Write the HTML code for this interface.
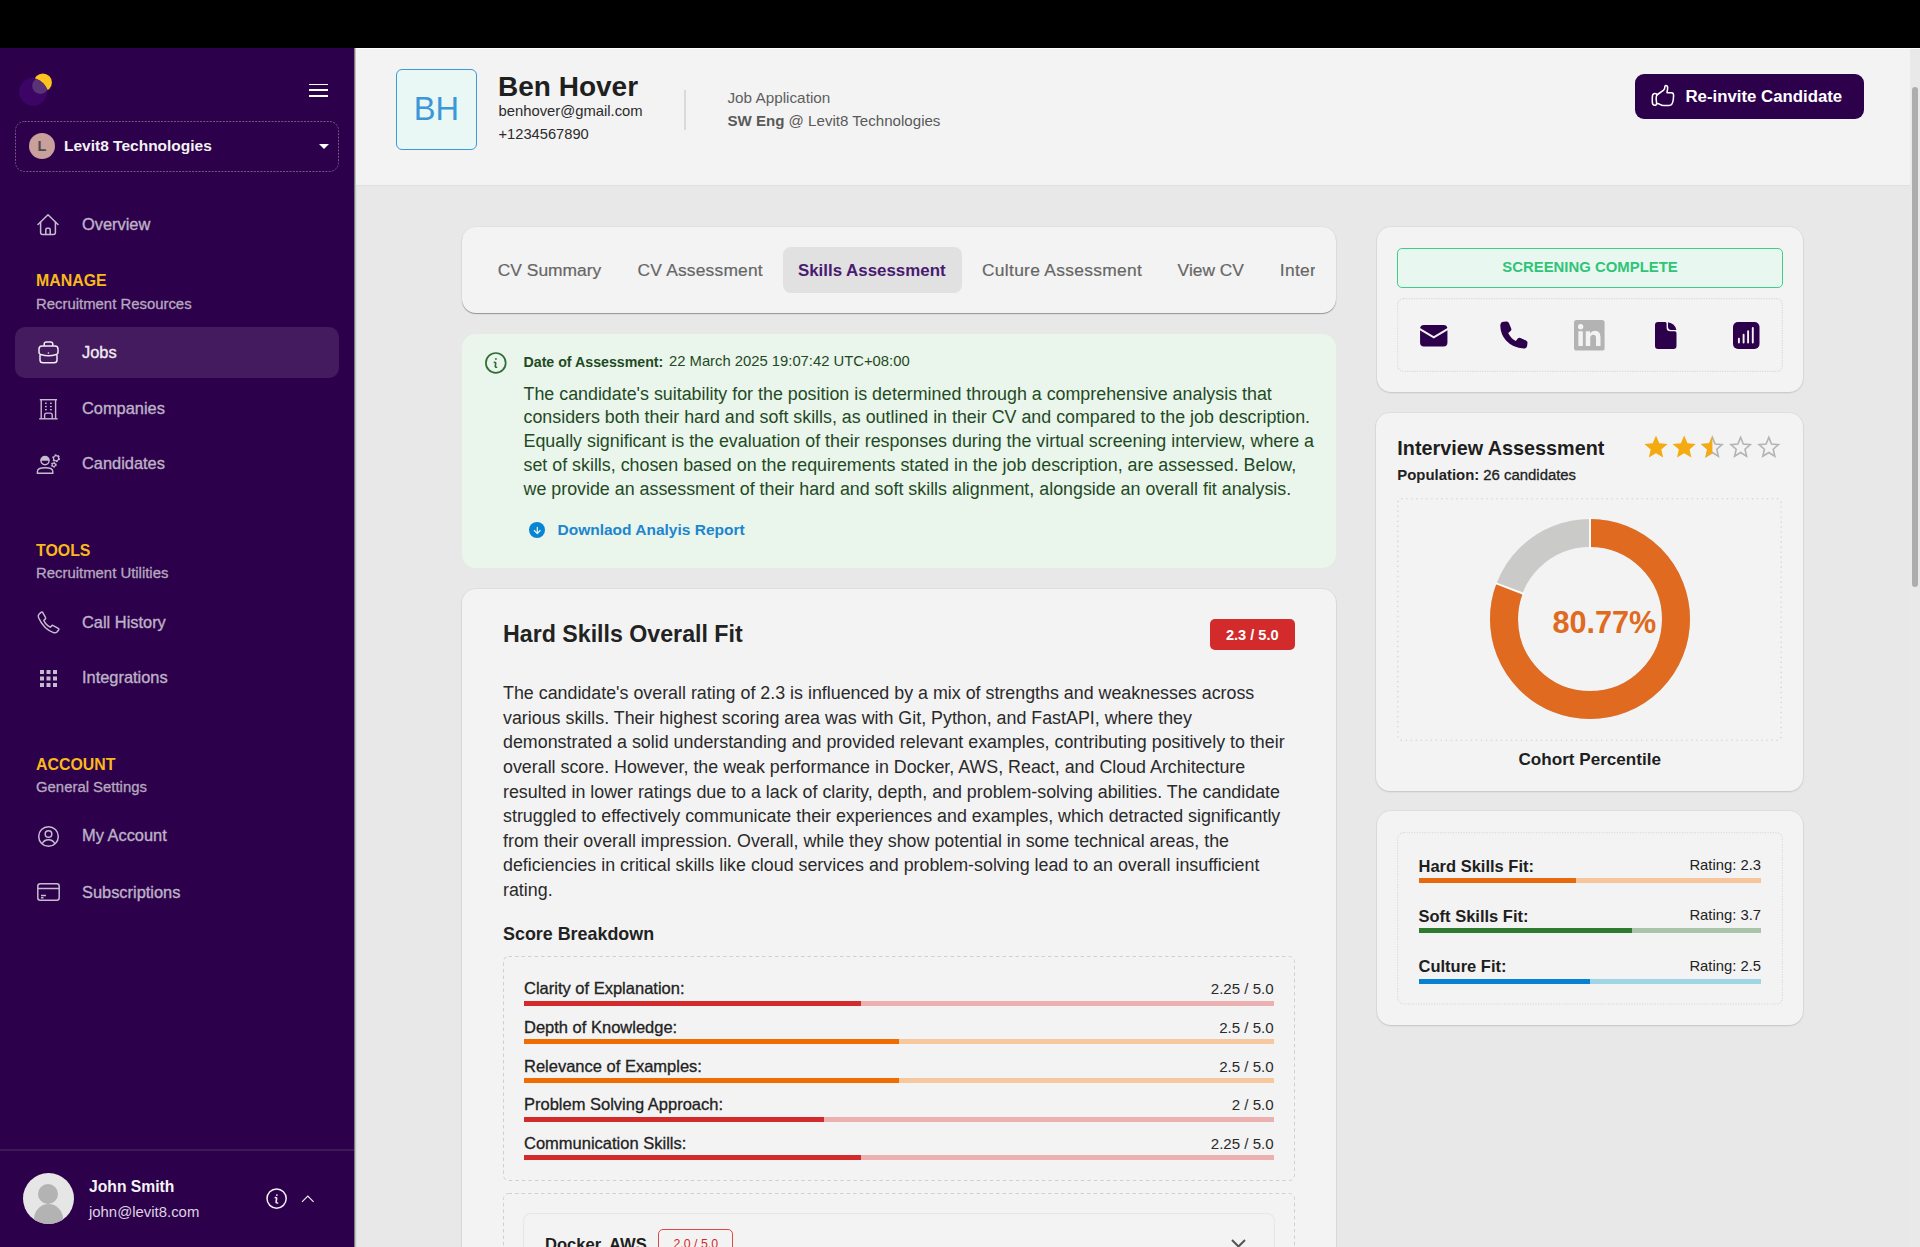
<!DOCTYPE html>
<html><head><meta charset="utf-8">
<style>
*{box-sizing:border-box;margin:0;padding:0}
html,body{width:1920px;height:1247px;overflow:hidden;background:#e8e8e8;font-family:"Liberation Sans",sans-serif}
.a{position:absolute}
.t{position:absolute;white-space:nowrap;line-height:1}
#topbar{left:0;top:0;width:1920px;height:48px;background:#000}
#side{left:0;top:48px;width:354px;height:1199px;background:#2d004b}
#sideb{left:354px;top:48px;width:3px;height:1199px;background:linear-gradient(90deg,#7c7c7c 0,#7c7c7c 1px,#c0c7c0 1px,#c0c7c0 2px,#dfe0e0 2px)}
#hdr{left:356px;top:48px;width:1554px;height:138px;background:#f3f3f3;border-bottom:1px solid #e0e0e0;border-top:1px solid #fff}
#sb{left:1910px;top:48px;width:10px;height:1199px;background:#e9e9e9;border-top:1px solid #fff}
#thumb{left:1912px;top:87px;width:5.5px;height:499.6px;background:#adadad;border-radius:3px}
.card{position:absolute;background:#f3f3f3;border-radius:14px;box-shadow:0 0 0 1px rgba(0,0,0,.035),0 1px 2px rgba(0,0,0,.12)}
.nav{color:#bdb3c7;font-size:16.4px;-webkit-text-stroke:0.35px #bdb3c7}
.sec{color:#f9b91a;font-size:15.9px;font-weight:bold;letter-spacing:0}
.sub{color:#b5a9bf;font-size:14.9px;-webkit-text-stroke:0.3px #b5a9bf}
svg{position:absolute;overflow:visible}
</style></head><body>
<div id="topbar" class="a"></div>
<div id="side" class="a"></div>
<div id="sideb" class="a"></div>
<div id="hdr" class="a"></div>
<div id="sb" class="a"></div>
<div id="thumb" class="a"></div>

<!-- sidebar content -->
<!-- logo -->
<svg style="left:15px;top:70px" width="40" height="40" viewBox="0 0 40 40">
<defs><clipPath id="lc"><circle cx="14" cy="27.4" r="20"/></clipPath>
<mask id="ym"><rect x="0" y="0" width="40" height="40" fill="#fff"/><circle cx="14" cy="27.4" r="20" fill="#000"/></mask></defs>
<circle cx="18.1" cy="21.8" r="14" fill="#3c0465"/>
<circle cx="27.85" cy="12.5" r="9.05" fill="#fec31f" mask="url(#ym)"/>
<circle cx="25.4" cy="15.7" r="8.2" fill="#5a3278" clip-path="url(#lc)"/>
</svg>

<!-- hamburger -->
<div class="a" style="left:309px;top:83.7px;width:19px;height:1.8px;background:#fff"></div>
<div class="a" style="left:309px;top:89.2px;width:19px;height:1.8px;background:#fff"></div>
<div class="a" style="left:309px;top:94.9px;width:19px;height:1.8px;background:#fff"></div>

<!-- company selector -->
<svg style="left:15px;top:121px" width="324" height="51" viewBox="0 0 324 51"><rect x="0.5" y="0.5" width="323" height="50" rx="9" fill="none" stroke="#6f5887" stroke-width="1" stroke-dasharray="2 1.25" stroke-linecap="butt"/></svg>
<div class="a" style="left:29px;top:133px;width:26px;height:26px;border-radius:50%;background:#c9a09c"></div>
<div class="t" style="left:29px;width:26px;text-align:center;top:138.5px;font-size:14.5px;color:#4d4d4d;font-weight:bold">L</div>
<div class="t" style="left:64px;top:138px;font-size:15.5px;color:#f2f2f2;font-weight:bold">Levit8 Technologies</div>
<div class="a" style="left:319px;top:144px;width:0;height:0;border-left:5px solid transparent;border-right:5px solid transparent;border-top:5px solid #fff"></div>


<!-- nav -->
<div class="a" style="left:15px;top:327px;width:324px;height:51px;border-radius:10px;background:#431b5e"></div>
<div class="t nav" style="left:82px;top:215.8px">Overview</div>
<div class="t sec" style="left:36px;top:273.4px">MANAGE</div>
<div class="t sub" style="left:36px;top:296.5px">Recruitment Resources</div>
<div class="t nav" style="left:82px;top:343.6px;color:#f0ecf2;-webkit-text-stroke:0.35px #f0ecf2">Jobs</div>
<div class="t nav" style="left:82px;top:399.7px">Companies</div>
<div class="t nav" style="left:82px;top:455.4px">Candidates</div>
<div class="t sec" style="left:36px;top:542.7px">TOOLS</div>
<div class="t sub" style="left:36px;top:566.3px">Recruitment Utilities</div>
<div class="t nav" style="left:82px;top:613.7px">Call History</div>
<div class="t nav" style="left:82px;top:669.4px">Integrations</div>
<div class="t sec" style="left:36px;top:757.4px">ACCOUNT</div>
<div class="t sub" style="left:36px;top:780.3px">General Settings</div>
<div class="t nav" style="left:82px;top:827.2px">My Account</div>
<div class="t nav" style="left:82px;top:883.7px">Subscriptions</div>

<!-- icons -->
<svg style="left:37px;top:213px" width="22" height="23" viewBox="0 0 22 23" fill="none" stroke="#c6bccf" stroke-width="1.5" stroke-linejoin="round" stroke-linecap="round">
<path d="M1 11.5 L11 1.8 L21 11.5"/><path d="M3.6 9.2 V19.6 Q3.6 21.6 5.6 21.6 H16.4 Q18.4 21.6 18.4 19.6 V9.2"/><path d="M8.8 21.6 V16.4 Q8.8 15.2 10 15.2 H12 Q13.2 15.2 13.2 16.4 V21.6"/></svg>
<svg style="left:38px;top:341px" width="22" height="23" viewBox="0 0 22 23" fill="none" stroke="#f0ecf2" stroke-width="1.5" stroke-linejoin="round">
<path d="M1 8 Q1 4.9 4 4.9 H17 Q20 4.9 20 8 V11.3 Q20 13.3 17.5 13.8 Q10.5 15.6 3.5 13.8 Q1 13.3 1 11.3 Z"/><path d="M2 14 V19 Q2 21.8 5 21.8 H16 Q19 21.8 19 19 V14"/><path d="M6.2 4.9 V3.2 Q6.2 1 8.4 1 H12.6 Q14.8 1 14.8 3.2 V4.9"/><circle cx="10.4" cy="12" r="0.8" fill="#f0ecf2" stroke="none"/></svg>
<svg style="left:39px;top:397.5px" width="19" height="22" viewBox="0 0 19 22" fill="none" stroke="#c6bccf" stroke-width="1.4">
<path d="M0.8 1.7 H18"/><path d="M2.2 1.7 V20.8 M16.6 1.7 V20.8"/><path d="M0.2 20.8 H18.6"/><path d="M5.6 20.8 V17 Q5.6 15.1 7.6 15.1 H11.2 Q13.2 15.1 13.2 17 V20.8"/>
<g fill="#c6bccf" stroke="none"><rect x="6" y="4.6" width="1.8" height="1.3"/><rect x="11" y="4.6" width="1.8" height="1.3"/><rect x="6" y="7.9" width="1.8" height="1.3"/><rect x="11" y="7.9" width="1.8" height="1.3"/><rect x="6" y="11" width="1.8" height="1.3"/><rect x="11" y="11" width="1.8" height="1.3"/></g></svg>
<svg style="left:36px;top:455px" width="24" height="20" viewBox="0 0 24 20" fill="none" stroke="#c6bccf" stroke-width="1.4">
<path d="M1.4 18.3 V16.5 Q1.4 12.8 9.1 12.8 Q16.8 12.8 16.8 16.5 V18.3 Z"/>
<circle cx="9" cy="5.6" r="4.1"/><path d="M4.6 5.8 H13.4 Q13.4 1.2 9 1.2 Q4.6 1.2 4.6 5.8 Z" fill="#c6bccf" stroke="none"/>
<g fill="none"><circle cx="20.1" cy="3.3" r="2.6" stroke-width="1.3"/><circle cx="20.1" cy="3.3" r="3.3" stroke-width="1.4" stroke-dasharray="1.6 1.85"/>
<circle cx="17.8" cy="9.8" r="1.7" stroke-width="1.2"/><circle cx="17.8" cy="9.8" r="2.3" stroke-width="1.2" stroke-dasharray="1.2 1.2"/></g></svg>
<svg style="left:37px;top:611px" width="23" height="23" viewBox="0 0 23 23" fill="none" stroke="#c6bccf" stroke-width="1.5" stroke-linejoin="round">
<path d="M5.5 1.2 L8.5 6.5 Q9 7.5 8 8.3 L6.8 9.3 Q8.5 13.8 13.3 16.2 L14.5 15 Q15.3 14 16.3 14.6 L21.6 17.6 Q22.2 18.2 21.6 19 L20 21 Q18.6 22.2 16.5 21.6 Q6.5 18 1.5 6.5 Q0.8 4.5 2 3.2 L4 1.4 Q4.8 0.8 5.5 1.2 Z"/></svg>
<svg style="left:40px;top:670px" width="17" height="17" viewBox="0 0 17 17" fill="#c6bccf">
<rect x="0" y="0" width="4" height="4"/><rect x="6.5" y="0" width="4" height="4"/><rect x="13" y="0" width="4" height="4"/>
<rect x="0" y="6.5" width="4" height="4"/><rect x="6.5" y="6.5" width="4" height="4"/><rect x="13" y="6.5" width="4" height="4"/>
<rect x="0" y="13" width="4" height="4"/><rect x="6.5" y="13" width="4" height="4"/><rect x="13" y="13" width="4" height="4"/></svg>
<svg style="left:38px;top:826px" width="21" height="21" viewBox="0 0 21 21" fill="none" stroke="#c6bccf" stroke-width="1.5">
<circle cx="10.5" cy="10.5" r="9.8"/><circle cx="10.5" cy="8" r="3.3"/><path d="M4.2 17.8 Q6 13.8 10.5 13.8 Q15 13.8 16.8 17.8"/></svg>
<svg style="left:37px;top:883px" width="23" height="18" viewBox="0 0 23 18" fill="none" stroke="#c6bccf" stroke-width="1.5">
<rect x="0.8" y="0.8" width="21.4" height="16.4" rx="2.5"/><path d="M0.8 5.5 H22.2"/><path d="M4 12.5 H9 M4 14.8 H6.5"/></svg>

<!-- sidebar footer -->
<div class="a" style="left:0;top:1149px;width:354px;height:2px;background:#3c1957"></div>
<div class="a" style="left:23px;top:1173px;width:51px;height:51px;border-radius:50%;background:#e6e6e6;overflow:hidden">
<div class="a" style="left:15px;top:11px;width:20px;height:20px;border-radius:50%;background:#b3b3b3"></div>
<div class="a" style="left:11px;top:31px;width:29px;height:30px;border-radius:50%;background:#b3b3b3"></div></div>
<div class="t" style="left:89px;top:1179px;font-size:15.7px;font-weight:bold;color:#f4f4f4">John Smith</div>
<div class="t" style="left:89px;top:1205.2px;font-size:14.9px;color:#ddd3e2">john@levit8.com</div>
<svg style="left:266px;top:1188px" width="21" height="21" viewBox="0 0 21 21" fill="none" stroke="#f2f2f2" stroke-width="1.5">
<circle cx="10.6" cy="10.6" r="9.6"/><path d="M9.3 9.6 Q10.9 9.4 10.6 10.9 L10.1 13.6 Q9.9 15.2 11.6 15" stroke-width="1.6" stroke-linecap="round" stroke-linejoin="round"/><circle cx="10.9" cy="7.1" r="0.9" fill="#f2f2f2" stroke="none"/></svg>
<svg style="left:301px;top:1195px" width="14" height="8" viewBox="0 0 14 8" fill="none" stroke="#eee" stroke-width="1.15"><path d="M1 6.8 L6.8 1 L12.6 6.8"/></svg>

<!-- header -->
<div class="a" style="left:396px;top:69px;width:81px;height:81px;border:1.8px solid #3d9ad8;border-radius:6px;background:#e9f7f5"></div>
<div class="t" style="left:396px;width:81px;text-align:center;top:93.2px;font-size:32.6px;color:#3a98d8">BH</div>
<div class="t" style="left:498px;top:72.8px;font-size:28px;font-weight:bold;color:#1f1f1f">Ben Hover</div>
<div class="t" style="left:498.5px;top:103.5px;font-size:14.8px;color:#2b2b2b">benhover@gmail.com</div>
<div class="t" style="left:498.5px;top:127px;font-size:14.7px;color:#2b2b2b">+1234567890</div>
<div class="a" style="left:684px;top:89.5px;width:2px;height:40px;background:#dadada"></div>
<div class="t" style="left:727.4px;top:90px;font-size:15.3px;color:#606060">Job Application</div>
<div class="t" style="left:727.4px;top:112.8px;font-size:15.1px;color:#595959"><b>SW Eng</b> @ Levit8 Technologies</div>
<div class="a" style="left:1635px;top:74px;width:229px;height:45px;border-radius:9px;background:#2d004b"></div>
<div class="t" style="left:1685.5px;top:88.7px;font-size:16.8px;font-weight:bold;color:#fff">Re-invite Candidate</div>
<svg style="left:1645px;top:80px" width="40" height="32" viewBox="0 0 40 32" fill="none" stroke="#fff" stroke-width="1.55" stroke-linejoin="round" stroke-linecap="round">
<path d="M9.6 13.6 Q7.3 13.8 7.3 17.5 L7.3 22 Q7.4 25.3 9.8 25.3 Q11.7 25.3 11.6 23 L11.2 19.5 Q11.1 16.5 11.8 15 Q12 13.5 9.6 13.6 Z"/>
<path d="M11.8 15 L18.3 10.4 Q19.8 9.2 19.8 7.6 Q19.8 5.4 20.8 5.4 Q22.7 5.4 22.7 8 L22 12.7 L26.4 12.7 Q28.6 12.7 28.6 15.3 L28.3 19.5 Q27.6 25.5 24 25.5 L18.6 25.5 Q16.6 25.5 15 24.4 Q13.8 23.5 11.8 23.5"/></svg>

<!-- tabs card -->
<div class="card" style="left:462px;top:227px;width:874px;height:86px;box-shadow:0 1px 1px rgba(0,0,0,.35),0 0 2px rgba(0,0,0,.08)"></div>
<div class="a" style="left:783px;top:247px;width:179px;height:46px;border-radius:8px;background:#e1e1e1"></div>
<div class="a" style="left:462px;top:227px;width:874px;height:86px;overflow:hidden">
<div class="t" style="left:35.8px;top:261.6px;font-size:17.4px;color:#666;-webkit-text-stroke:0.2px #666;position:absolute;margin-top:-227px">CV Summary</div>
<div class="t" style="left:175.5px;top:261.6px;font-size:17.4px;color:#666;-webkit-text-stroke:0.2px #666;margin-top:-227px;letter-spacing:0.2px">CV Assessment</div>
<div class="t" style="left:335.9px;top:262.8px;font-size:16.9px;font-weight:bold;color:#481a70;margin-top:-227px">Skills Assessment</div>
<div class="t" style="left:520px;top:261.6px;font-size:17.4px;color:#666;-webkit-text-stroke:0.2px #666;margin-top:-227px;letter-spacing:0.3px">Culture Assessment</div>
<div class="t" style="left:715.6px;top:261.6px;font-size:17.4px;color:#666;-webkit-text-stroke:0.2px #666;margin-top:-227px">View CV</div>
<div class="t" style="left:817.8px;top:261.6px;font-size:17.4px;color:#666;-webkit-text-stroke:0.2px #666;margin-top:-227px;width:35.6px;overflow:hidden;letter-spacing:0.3px">Interview</div>
</div>

<!-- green info -->
<div class="a" style="left:462px;top:334px;width:874px;height:234px;border-radius:14px;background:#eaf5eb"></div>
<svg style="left:484.5px;top:352px" width="22" height="22" viewBox="0 0 22 22" fill="none" stroke="#2f6e35" stroke-width="1.7">
<circle cx="10.8" cy="10.9" r="9.9"/><path d="M9.4 10.4 Q10.9 10.2 10.7 11.6 L10.3 13.9 Q10.1 15.4 11.6 15.3" stroke-width="1.6" stroke-linecap="round" stroke-linejoin="round"/><circle cx="10.9" cy="6.9" r="0.95" fill="#2f6e35" stroke="none"/></svg>
<div class="t" style="left:523.5px;top:354.5px;font-size:14.2px;color:#1e4a24"><b>Date of Assessment:</b></div>
<div class="t" style="left:669px;top:354px;font-size:14.8px;color:#1e4a24">22 March 2025 19:07:42 UTC+08:00</div>
<div class="a" style="left:523.5px;top:382.6px;font-size:17.85px;line-height:23.875px;color:#1f4a25;white-space:nowrap">The candidate's suitability for the position is determined through a comprehensive analysis that<br>considers both their hard and soft skills, as outlined in their CV and compared to the job description.<br>Equally significant is the evaluation of their responses during the virtual screening interview, where a<br>set of skills, chosen based on the requirements stated in the job description, are assessed. Below,<br>we provide an assessment of their hard and soft skills alignment, alongside an overall fit analysis.</div>
<div class="a" style="left:528.9px;top:521.9px;width:16.4px;height:16.4px;border-radius:50%;background:#0884d4"></div>
<svg style="left:529px;top:522px" width="16" height="16" viewBox="0 0 16 16" fill="none" stroke="#e6f4f0" stroke-width="1.25" stroke-linecap="round" stroke-linejoin="round"><path d="M8.3 5.4 V10.6 M5.3 8.5 L8.3 11.6 L11.1 8.5"/></svg>
<div class="t" style="left:557.5px;top:521.7px;font-size:15.5px;font-weight:bold;color:#1a86cf">Downlaod Analyis Report</div>

<!-- hard skills card -->
<div class="card" style="left:462px;top:588.5px;width:874px;height:700px"></div>
<div class="t" style="left:503px;top:623.3px;font-size:23.2px;font-weight:bold;color:#222">Hard Skills Overall Fit</div>
<div class="a" style="left:1209.5px;top:619px;width:85.5px;height:30.5px;border-radius:5px;background:#d32b2b"></div>
<div class="t" style="left:1209.5px;width:85.5px;text-align:center;top:628px;font-size:14.6px;font-weight:bold;color:#fff">2.3 / 5.0</div>
<div class="a" style="left:503px;top:681px;font-size:17.85px;line-height:24.63px;color:#2a2a2a;white-space:nowrap">The candidate's overall rating of 2.3 is influenced by a mix of strengths and weaknesses across<br>various skills. Their highest scoring area was with Git, Python, and FastAPI, where they<br>demonstrated a solid understanding and provided relevant examples, contributing positively to their<br>overall score. However, the weak performance in Docker, AWS, React, and Cloud Architecture<br>resulted in lower ratings due to a lack of clarity, depth, and problem-solving abilities. The candidate<br>struggled to effectively communicate their experiences and examples, which detracted significantly<br>from their overall impression. Overall, while they show potential in some technical areas, the<br>deficiencies in critical skills like cloud services and problem-solving lead to an overall insufficient<br>rating.</div>
<div class="t" style="left:503px;top:926.2px;font-size:17.9px;font-weight:bold;color:#222">Score Breakdown</div>

<!-- score breakdown -->
<svg style="left:503px;top:956px" width="792" height="225" viewBox="0 0 792 225"><rect x="0.5" y="0.5" width="791" height="224" rx="5" fill="none" stroke="#d0d0d0" stroke-width="1" stroke-dasharray="3.5 3" stroke-linecap="butt"/></svg>
<div class="t" style="left:524px;top:980.3px;font-size:16.5px;color:#222;-webkit-text-stroke:0.3px #222">Clarity of Explanation:</div>
<div class="t" style="left:1073.7px;width:200px;text-align:right;top:981.4px;font-size:15.1px;color:#2a2a2a">2.25 / 5.0</div>
<div class="a" style="left:524px;top:1000.8px;width:749.5px;height:5px;background:#ecb0b0"></div>
<div class="a" style="left:524px;top:1000.8px;width:337.3px;height:5px;background:#d32b2b"></div>
<div class="t" style="left:524px;top:1018.9px;font-size:16.5px;color:#222;-webkit-text-stroke:0.3px #222">Depth of Knowledge:</div>
<div class="t" style="left:1073.7px;width:200px;text-align:right;top:1020.0px;font-size:15.1px;color:#2a2a2a">2.5 / 5.0</div>
<div class="a" style="left:524px;top:1039.4px;width:749.5px;height:5px;background:#f7c89d"></div>
<div class="a" style="left:524px;top:1039.4px;width:374.8px;height:5px;background:#ef6c00"></div>
<div class="t" style="left:524px;top:1057.5px;font-size:16.5px;color:#222;-webkit-text-stroke:0.3px #222">Relevance of Examples:</div>
<div class="t" style="left:1073.7px;width:200px;text-align:right;top:1058.6px;font-size:15.1px;color:#2a2a2a">2.5 / 5.0</div>
<div class="a" style="left:524px;top:1078.0px;width:749.5px;height:5px;background:#f7c89d"></div>
<div class="a" style="left:524px;top:1078.0px;width:374.8px;height:5px;background:#ef6c00"></div>
<div class="t" style="left:524px;top:1096.1px;font-size:16.5px;color:#222;-webkit-text-stroke:0.3px #222">Problem Solving Approach:</div>
<div class="t" style="left:1073.7px;width:200px;text-align:right;top:1097.2px;font-size:15.1px;color:#2a2a2a">2 / 5.0</div>
<div class="a" style="left:524px;top:1116.6px;width:749.5px;height:5px;background:#ecb0b0"></div>
<div class="a" style="left:524px;top:1116.6px;width:299.8px;height:5px;background:#d32b2b"></div>
<div class="t" style="left:524px;top:1134.7px;font-size:16.5px;color:#222;-webkit-text-stroke:0.3px #222">Communication Skills:</div>
<div class="t" style="left:1073.7px;width:200px;text-align:right;top:1135.8px;font-size:15.1px;color:#2a2a2a">2.25 / 5.0</div>
<div class="a" style="left:524px;top:1155.2px;width:749.5px;height:5px;background:#ecb0b0"></div>
<div class="a" style="left:524px;top:1155.2px;width:337.3px;height:5px;background:#d32b2b"></div>

<svg style="left:503px;top:1193px" width="792" height="100" viewBox="0 0 792 100"><rect x="0.5" y="0.5" width="791" height="99" rx="5" fill="none" stroke="#d0d0d0" stroke-width="1" stroke-dasharray="3.5 3" stroke-linecap="butt"/></svg>
<div class="a" style="left:524px;top:1213.5px;width:750px;height:100px;border-radius:7px;background:#f3f3f3;box-shadow:0 0 0 1px #e6e6e6,0 1px 2px rgba(0,0,0,.06)"></div>
<div class="t" style="left:545px;top:1237.3px;font-size:16.6px;font-weight:bold;color:#1e1e1e">Docker, AWS</div>
<div class="a" style="left:658.3px;top:1229.3px;width:75px;height:30px;border:1.5px solid #de4a4a;border-radius:5px"></div>
<div class="t" style="left:658.3px;width:75px;text-align:center;top:1238px;font-size:12.4px;color:#d32b2b">2.0 / 5.0</div>
<svg style="left:1231px;top:1239px" width="15" height="9" viewBox="0 0 15 9" fill="none" stroke="#555" stroke-width="2"><path d="M1 1 L7.5 7.5 L14 1"/></svg>

<!-- right card 1 -->
<div class="card" style="left:1376.6px;top:227px;width:426.4px;height:165px"></div>
<div class="a" style="left:1397px;top:247.7px;width:386px;height:40.5px;border:1.7px solid #3ccf86;border-radius:5px;background:#e8f8f0"></div>
<div class="t" style="left:1397px;width:386px;text-align:center;top:260.2px;font-size:14.9px;font-weight:bold;color:#2fc477">SCREENING COMPLETE</div>
<svg style="left:1397px;top:298px" width="386" height="74" viewBox="0 0 386 74"><rect x="0.6" y="0.6" width="384.8" height="72.8" rx="6" fill="none" stroke="#d9d9d9" stroke-width="1.2" stroke-dasharray="1.2 1.3"/></svg>
<svg style="left:1420px;top:324.5px" width="27.5" height="21.5" viewBox="0 0 28 22"><rect x="0" y="0" width="28" height="22" rx="4" fill="#2d004b"/><path d="M-1 3.6 L14 12.6 L29 3.6" fill="none" stroke="#f3f3f3" stroke-width="2.1"/></svg>
<svg style="left:1500px;top:321px" width="28" height="28" viewBox="0 0 28 28"><path d="M6.5 0.5 Q8.2 0.3 8.9 2 L11.2 7.5 Q11.8 9 10.6 10 L8.2 12 Q10.5 17 15.8 20 L17.8 17.6 Q18.9 16.4 20.4 17.1 L26 19.4 Q27.6 20.1 27.5 21.8 L27.2 24.5 Q26.8 27.6 23.8 27.6 Q13 27 6 19.5 Q0.4 13 0.3 4.5 Q0.4 1 3.6 0.7 Z" fill="#2d004b"/></svg>
<svg style="left:1574.4px;top:319.8px" width="30.6" height="30.6" viewBox="0 0 30 30"><rect x="0" y="0" width="30" height="30" rx="2.5" fill="#b3b3b3"/><circle cx="6.5" cy="6.6" r="2.6" fill="#f3f3f3"/><rect x="4.3" y="11" width="4.4" height="14.5" fill="#f3f3f3"/><path d="M11.5 11 H15.7 V13.2 Q17.2 10.6 20.6 10.6 Q26 10.6 26 17 V25.5 H21.6 V17.8 Q21.6 14.5 18.9 14.5 Q15.9 14.5 15.9 18 V25.5 H11.5 Z" fill="#f3f3f3"/></svg>
<svg style="left:1654.5px;top:321.5px" width="21.5" height="27" viewBox="0 0 21.5 27"><path d="M3 0 H10.2 Q11.6 0 11.6 1.6 V5.8 Q11.6 9.3 15.2 9.3 H19.8 Q21.5 9.3 21.5 11 V24 Q21.5 27 18.5 27 H3 Q0 27 0 24 V3 Q0 0 3 0 Z" fill="#2d004b"/><path d="M13 0.3 Q20 1.5 21.4 7.9 H16 Q13 7.9 13 4.8 Z" fill="#2d004b"/></svg>
<svg style="left:1733px;top:321.5px" width="26.5" height="27" viewBox="0 0 26.5 27"><rect x="0" y="0" width="26.5" height="27" rx="5" fill="#2d004b"/><g stroke="#f3f3f3" stroke-width="1.9" stroke-linecap="round"><path d="M5.9 20.6 V16.6 M10.6 20.6 V12.8 M15.1 20.6 V9.2 M19.8 20.6 V6"/></g></svg>

<!-- right card 2 -->
<div class="card" style="left:1376.4px;top:412.8px;width:426.6px;height:378.5px"></div>
<div class="t" style="left:1397.3px;top:439.4px;font-size:19.8px;font-weight:bold;color:#1e1e1e">Interview Assessment</div>
<svg style="left:1642.5px;top:434px" width="140" height="26" viewBox="0 0 140 26">
<defs><path id="st" d="M13 1.5 L16.3 9.2 L24.6 9.9 L18.3 15.4 L20.2 23.6 L13 19.2 L5.8 23.6 L7.7 15.4 L1.4 9.9 L9.7 9.2 Z"/>
<path id="st2" d="M13 3.4 L15.7 10 L22.7 10.6 L17.4 15.2 L19 22.2 L13 18.5 L7 22.2 L8.6 15.2 L3.3 10.6 L10.3 10 Z"/>
<clipPath id="half"><rect x="0" y="0" width="13" height="26"/></clipPath></defs>
<use href="#st" x="0" fill="#f4ab12"/>
<use href="#st" x="28.2" fill="#f4ab12"/>
<use href="#st2" x="56.4" fill="none" stroke="#b2b5b2" stroke-width="1.6"/>
<g transform="translate(56.4 0)"><use href="#st" fill="#f4ab12" clip-path="url(#half)"/></g>
<use href="#st2" x="84.6" fill="none" stroke="#b2b5b2" stroke-width="1.6"/>
<use href="#st2" x="112.8" fill="none" stroke="#b2b5b2" stroke-width="1.6"/>
</svg>
<div class="t" style="left:1397.3px;top:467.6px;font-size:14.9px;color:#222"><b>Population:</b> <span style="-webkit-text-stroke:0.3px #222">26 candidates</span></div>
<svg style="left:1397px;top:497.5px" width="385" height="243" viewBox="0 0 385 243"><rect x="0.8" y="0.8" width="383.4" height="241.4" rx="4" fill="none" stroke="#d6d6d6" stroke-width="1.6" stroke-dasharray="0.01 5" stroke-linecap="round"/></svg>
<svg style="left:1489.7px;top:518.8px" width="200" height="200" viewBox="0 0 200 200">
<circle cx="100" cy="100" r="86" fill="none" stroke="#cacbc9" stroke-width="28"/>
<circle cx="100" cy="100" r="86" fill="none" stroke="#e06a20" stroke-width="28" stroke-dasharray="436.4 1000" transform="rotate(-90 100 100)"/>
<line x1="100" y1="-1" x2="100" y2="29.5" stroke="#fff" stroke-width="1.9"/>
<line x1="100" y1="-1" x2="100" y2="29.5" stroke="#fff" stroke-width="1.9" transform="rotate(290.77 100 100)"/>
</svg>
<div class="t" style="left:1552.5px;top:607px;font-size:30.6px;font-weight:bold;color:#e06a20">80.77%</div>
<div class="t" style="left:1518.5px;top:751px;font-size:17.1px;font-weight:bold;color:#1e1e1e">Cohort Percentile</div>

<!-- right card 3 -->
<div class="card" style="left:1376.6px;top:811.2px;width:426.4px;height:214.3px"></div>
<svg style="left:1397px;top:832px" width="386" height="172.5" viewBox="0 0 386 172.5"><rect x="0.6" y="0.6" width="384.8" height="171.3" rx="6" fill="none" stroke="#dcdcdc" stroke-width="1.2" stroke-dasharray="1.2 1.4"/></svg>
<div class="t" style="left:1418.5px;top:857.5px;font-size:16.5px;font-weight:bold;color:#1e1e1e">Hard Skills Fit:</div>
<div class="t" style="left:1561px;width:200px;text-align:right;top:857.8px;font-size:14.8px;color:#222">Rating: 2.3</div>
<div class="a" style="left:1418.5px;top:878.0px;width:342.5px;height:5px;background:#f6c59c"></div>
<div class="a" style="left:1418.5px;top:878.0px;width:157.7px;height:5px;background:#e8680c"></div>
<div class="t" style="left:1418.5px;top:907.9px;font-size:16.5px;font-weight:bold;color:#1e1e1e">Soft Skills Fit:</div>
<div class="t" style="left:1561px;width:200px;text-align:right;top:908.2px;font-size:14.8px;color:#222">Rating: 3.7</div>
<div class="a" style="left:1418.5px;top:928.4px;width:342.5px;height:5px;background:#a9c4a9"></div>
<div class="a" style="left:1418.5px;top:928.4px;width:213.5px;height:5px;background:#2e7b30"></div>
<div class="t" style="left:1418.5px;top:958.3px;font-size:16.5px;font-weight:bold;color:#1e1e1e">Culture Fit:</div>
<div class="t" style="left:1561px;width:200px;text-align:right;top:958.6px;font-size:14.8px;color:#222">Rating: 2.5</div>
<div class="a" style="left:1418.5px;top:978.8px;width:342.5px;height:5px;background:#a0d5e5"></div>
<div class="a" style="left:1418.5px;top:978.8px;width:171.3px;height:5px;background:#0a80d0"></div>
</body></html>
